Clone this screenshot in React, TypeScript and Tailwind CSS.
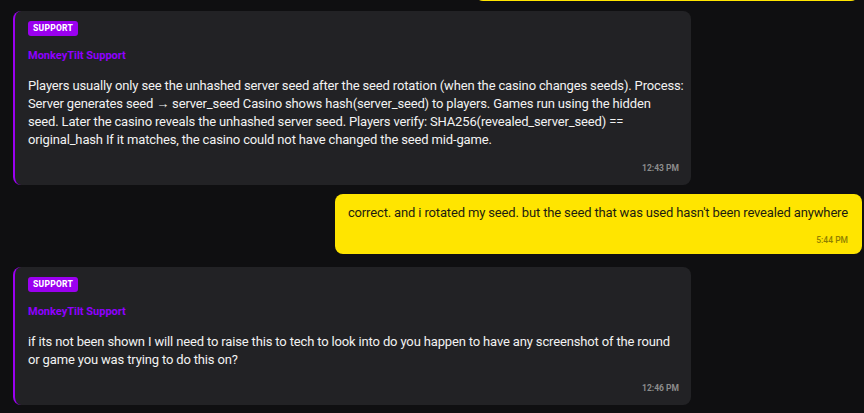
import React from "react";

type SupportMsg = {
  id: number;
  lines: string[];
  time: string;
};

// line breaks follow the reference wrap
const first: SupportMsg = {
  id: 1,
  lines: [
    "Players usually only see the unhashed server seed after the seed rotation (when the casino changes seeds). Process:",
    "Server generates seed → server_seed Casino shows hash(server_seed) to players. Games run using the hidden",
    "seed. Later the casino reveals the unhashed server seed. Players verify: SHA256(revealed_server_seed) ==",
    "original_hash If it matches, the casino could not have changed the seed mid-game.",
  ],
  time: "12:43 PM",
};

const second: SupportMsg = {
  id: 2,
  lines: [
    "if its not been shown I will need to raise this to tech to look into do you happen to have any screenshot of the round",
    "or game you was trying to do this on?",
  ],
  time: "12:46 PM",
};

function SupportCard({ msg }: { msg: SupportMsg }) {
  return (
    <div className="ml-[13px] w-[678px] bg-[#222225] border-l-2 border-[#9b00f0] rounded-[8px] pl-[13px] pr-[12px] pt-[10px] pb-[11px]">
      <div className="flex h-[15px] w-fit items-center rounded-[3px] bg-[#9b00f0] px-[5px] text-[8.5px] leading-none font-extrabold tracking-[0.03em] text-white">
        SUPPORT
      </div>
      <div className="mt-[13px] text-[11px] leading-[14px] font-bold text-[#8f00ff]">
        MonkeyTilt Support
      </div>
      <p className="mt-[14px] text-[13px] leading-[18px] tracking-[-0.15px] whitespace-nowrap text-[#f2f2f2]">
        {msg.lines.map((l, i) => (
          <React.Fragment key={i}>
            {l}
            {i < msg.lines.length - 1 && <br />}
          </React.Fragment>
        ))}
      </p>
      <div className="mt-[13px] text-right text-[8.5px] leading-[12px] font-bold text-[#8c8c8c]">
        {msg.time}
      </div>
    </div>
  );
}

export default function App() {
  return (
    <div
      className="h-[413px] w-[864px] overflow-hidden bg-[#0f0f11]"
      style={{ fontFamily: "Roboto, 'Liberation Sans', sans-serif" }}
    >
      {/* previous user bubble, mostly scrolled out */}
      <div className="ml-[475px] mt-[-59px] h-[60px] w-[384px] rounded-[8px] bg-[#ffe500]" />

      <div className="mt-[10px]">
        <SupportCard msg={first} />
      </div>

      <div className="mt-[9px] flex justify-end pr-[2px]">
        <div className="rounded-[8px] bg-[#ffe500] pl-[13px] pr-[14px] pt-[10px] pb-[8px]">
          <p className="text-[13px] leading-[18px] tracking-[-0.15px] whitespace-nowrap text-[#1c1c10]">
            correct. and i rotated my seed. but the seed that was used hasn't been revealed anywhere
          </p>
          <div className="mt-[12px] text-right text-[8.5px] leading-[12px] font-medium text-[#8f8000]">
            5:44 PM
          </div>
        </div>
      </div>

      <div className="mt-[13px]">
        <SupportCard msg={second} />
      </div>
    </div>
  );
}
